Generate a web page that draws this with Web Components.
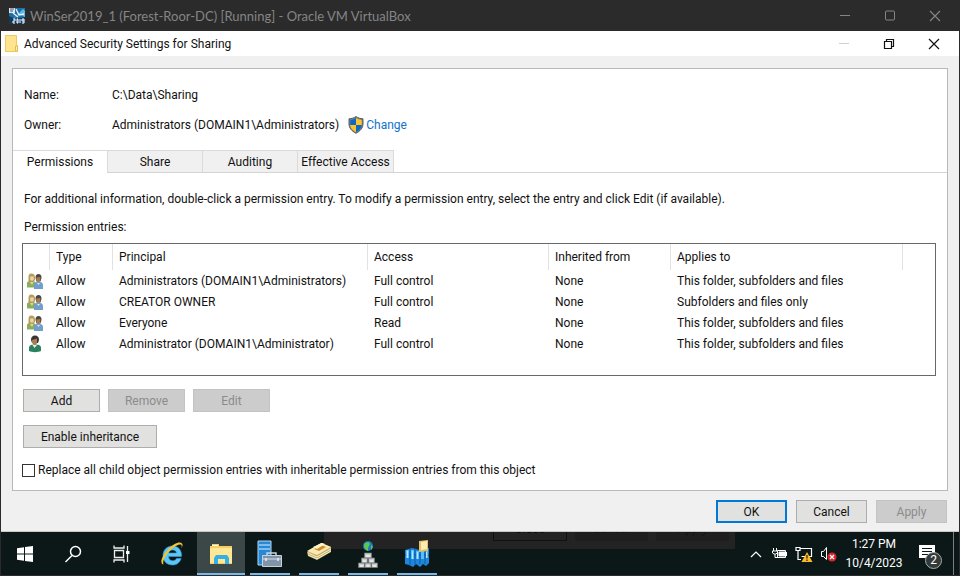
<!DOCTYPE html>
<html lang="en">
<head>
<meta charset="utf-8">
<title>Advanced Security Settings for Sharing</title>
<style>
html, body { margin: 0; height: 100%; }
body { background: #2b2b2b; color: #111; font: 12px/16px Roboto, "Liberation Sans", sans-serif; }
</style>
</head>
<body>
<vm-window></vm-window>
<script>
const define = (name, html, setup) => {
  const template = document.createElement('template');
  template.innerHTML = html;
  customElements.define(name, class extends HTMLElement {
    constructor() {
      super();
      this.attachShadow({ mode: 'open' }).append(template.content.cloneNode(true));
    }
    connectedCallback() { if (setup) setup(this, this.shadowRoot); }
  });
};

const ICONS = {
  vm: `<svg width="16" height="16" viewBox="0 0 16 16"><rect width="16" height="16" fill="#1f6fa8"/><path d="M0 0h6v5H0z" fill="#dce8ee"/><path d="M1 1h4M1 3h3" stroke="#556"/><path d="M3 12 14 1l2 2v6l-6-3z" fill="#5fb8e8"/><path d="M7 1l3 6 5-1M4 5l5 4" stroke="#e8f5fb" stroke-width="1.3" fill="none"/><path d="M0 8l6 3 10-2v7H0z" fill="#123a5c"/><path d="M4 11h2v2H4v2h2M8 11h1v4H8zM11 11v4M13 15h2v-4h-2v2h2" stroke="#fff" fill="none"/></svg>`,
  folder: `<svg width="13" height="18" viewBox="0 0 13 18"><path d="M0 0h12v10h1v7H0z" fill="#ffe48f"/><path d="M0.500 .5h11v10h1v6H.5z" fill="none" stroke="#f0cb5c"/><path d="M10.500 16v-5h2v5z" fill="#fff0b8" stroke="#e6bd4d"/></svg>`,
  shield: `<svg width="16" height="18" viewBox="0 0 16 18"><path d="M8 .5c2 1.500 4.500 2.200 7 2.300v5.200c0 4-3 7.300-7 9.300-4-2-7-5.300-7-9.300V2.800C3.500 2.700 6 2 8 .5z" fill="#7b8187" stroke="#555d63"/><path d="M8 2v7H2.300V4C4.500 3.800 6.500 3.200 8 2z" fill="#0f69c4"/><path d="M8 2v7h5.700V4C11.500 3.800 9.500 3.200 8 2z" fill="#fdc42c"/><path d="M2.300 9H8v7c-3-1.500-5.700-4-5.700-7z" fill="#fdc42c"/><path d="M13.700 9H8v7c3-1.500 5.700-4 5.700-7z" fill="#0f69c4"/></svg>`,
  group: `<svg width="16" height="16" viewBox="0 0 16 16"><path d="M0 14.500V10c0-1.500 2-2 5-2s4 1 4 3v3.500z" fill="#8aad5b"/><path d="M1.500 9V4C1.500 1 3 .5 4.500.5S8 1.500 8 4v3L6 9z" fill="#b29d5c"/><path d="M3.200 3.500h3.500v3c0 1.500-3.500 1.500-3.500 0z" fill="#efd3a6"/><path d="M3 9l2 3 1.500-3z" fill="#e3d5a0"/><path d="M7 16v-4c0-2.500 2-3 4.500-3s4.500.5 4.500 3v4z" fill="#729ecb"/><path d="M8.500 5c0-3 1-4 3-4s3 1 3 4l-1 3.500h-4z" fill="#4c4640"/><path d="M9.300 4.500l4-.5v3c0 2.500-3.500 2.500-4 0z" fill="#a9794f"/><path d="M10 10l1.500 2 1.500-2z" fill="#dbe6ef"/></svg>`,
  user: `<svg width="16" height="18" viewBox="0 0 16 18"><path d="M2 16v-3c0-3 2.500-3.500 6-3.500s6 .5 6 3.500v3c-3 1.500-9 1.500-12 0z" fill="#2c8060"/><path d="M4 5c0-3 1.500-4.500 4-4.500S12 2 12 5l-1 3H5z" fill="#39352f"/><path d="M5 5l5-1.500v4c0 3-4 3.500-5 0z" fill="#a77b56"/><path d="M5.500 10l2 3 2.500-3z" fill="#e9efe9"/></svg>`,
  minimize: `<svg width="10" height="12" viewBox="0 0 10 12"><path d="M0 5.500h10" stroke="currentColor"/></svg>`,
  maximize: `<svg width="10" height="12" viewBox="0 0 10 12"><rect x=".5" y="1" width="9" height="9" rx="1" fill="none" stroke="currentColor"/></svg>`,
  restore: `<svg width="12" height="12" viewBox="0 0 12 12"><path d="M1.500 3.500h7v7h-7zM3.500 3V1.500h7v7H9" fill="none" stroke="currentColor" stroke-width="1.200"/></svg>`,
  close: `<svg width="12" height="12" viewBox="0 0 12 12"><path d="M1 1l10 10M11 1L1 11" stroke="currentColor" stroke-width="1.200"/></svg>`,
  start: `<svg width="16" height="16" viewBox="0 0 16 16" fill="#fff"><path d="M0 2.200 7 1.200v6.300H0zM8 1l8-1v7.500H8zM0 8.500h7v6.300l-7-1zM8 8.500h8V16l-8-1z"/></svg>`,
  search: `<svg width="18" height="18" viewBox="0 0 18 18" fill="none" stroke="#fff" stroke-width="1.500"><circle cx="11.500" cy="6.500" r="5"/><path d="M8 10.500 1.500 17"/></svg>`,
  taskview: `<svg width="18" height="18" viewBox="0 0 18 18" fill="none" stroke="#eee" stroke-width="1.300"><path d="M2 .5V3h10V.5M2 17.500V15h10v2.500M2.500 5.500h9v7h-9zM15.500 1v16"/><path d="M14 6h3.500v3H14z" fill="#fff" stroke="none"/></svg>`,
  ie: `<svg width="24" height="26" viewBox="0 0 24 26"><path d="M21.500 15.500H8.500c.2 5 6.500 5.500 8 2h4.700C19.500 22 16.500 24 12.500 24 6.500 24 3 20 3 14.500S7 5 12.500 5s9.500 4 9 10.500zM8.700 12h7.800c-.3-4-7.300-4.200-7.800 0z" fill="#5cc6f7" stroke="#2f9bd9" stroke-width=".6"/><path d="M3.500 23.500C-1 22 2 15 8 8.500 13.500 2.500 20 0 22 2.500c1 1.200.5 3-.5 5 .5-2.500.5-4-1.500-4C16 3.500 8 10 4.500 17c-1.500 3-1.500 5-1 6.500z" fill="#f5c431"/></svg>`,
  explorer: `<svg width="22" height="20" viewBox="0 0 22 20"><path d="M0 2h2V0h7v2h13v18H0z" fill="#f5cd62"/><path d="M0 4h22v15H0z" fill="#ffe794"/><path d="M2 1h6v1H2z" fill="#fff"/><path d="M4 20v-6l2-3h11l2 3v6h-4v-5H8v5z" fill="#36aee8"/></svg>`,
  server: `<svg width="26" height="28" viewBox="0 0 26 28"><path d="M1 1h13v24H1z" fill="#2589d8" stroke="#b4dcf6"/><path d="M2 5h11M2 9h11" stroke="#d9effb"/><path d="M10 15v-2h9v2" fill="none" stroke="#cbd3db" stroke-width="1.500"/><path d="M5.500 15.500h19v11h-19z" fill="#8095aa" stroke="#c8d2dc"/><path d="M6 19h18" stroke="#d7dee5"/><path d="M9 18v3M21 18v3" stroke="#e9eef2" stroke-width="1.500"/></svg>`,
  notes: `<svg width="26" height="24" viewBox="0 0 26 24"><path d="M1 10 16 1l9 4v5L11 18 2 14z" fill="#c7b06b"/><path d="M1 9 15 1l10 4-14 8z" fill="#f8eab2"/><path d="M8 7l7-4 5 2-7 4z" fill="#d18e28"/><path d="M7 5l9-4 3 1-8 5z" fill="#fff5cc"/><path d="M2 11l9 4 14-8M2 13l9 4 14-8" stroke="#f6edc8" fill="none"/></svg>`,
  network: `<svg width="20" height="28" viewBox="0 0 20 28"><circle cx="10" cy="6" r="5" fill="#1879c9"/><path d="M7 3c4-2 6 0 4 3s0 4-1 5C6 9 5 6 7 3zM13 5l2 2-2 3z" fill="#5fc846"/><g fill="#cbcdcd" stroke="#74797a" stroke-width=".7"><path d="M6.500 13h7v5h-7zM3.500 18h6v5h-6zM10.500 18h6v5h-6zM.5 23h6v4.500h-6zM7 23h6v4.500H7zM13.500 23h6v4.500h-6z"/></g><path d="M8 16h4M5 21h3M12 21h3M2 26h3M8.500 26h3M15 26h3" stroke="#fff"/></svg>`,
  computers: `<svg width="24" height="28" viewBox="0 0 24 28"><path d="M0 10l7-2 8 2 9-2v15l-3 3-3-2-3 3-4-3-3 3-4-2-4-1z" fill="#1e86dc"/><path d="M5 9v16M10 9v16M15 10v14M20 9v15M0 15h24" stroke="#0b5ea8"/><path d="M1 10h3v8H1zM6 10h3v9H6zM11 11h3v8h-3zM16 11h3v8h-3zM21 10h2v8h-2z" fill="#5dbdf7"/><path d="M2 11h1v7H2zM7 11h1v8H7zM12 12h1v7h-1zM21 12h1v6h-1z" fill="#b8e8ff"/><path d="M14 1l9-1v11l-9 1z" fill="#e2c16a"/><path d="M16 2l6-1v8l-6 1z" fill="#fbecb6"/></svg>`,
  chevron: `<svg width="12" height="8" viewBox="0 0 12 8"><path d="M1 7l5-5 5 5" fill="none" stroke="#fff" stroke-width="1.200"/></svg>`,
  battery: `<svg width="16" height="14" viewBox="0 0 16 14" fill="none" stroke="#fff"><path d="M5.500 3.500h8v7h-8z"/><path d="M7 5h6v4H7z" fill="#fff"/><path d="M14.500 5v4M1.500 1v3M4.500 1v3M.5 4h5v2l-2 1H2L.5 6zM3 7v3.500h3"/></svg>`,
  lan: `<svg width="18" height="18" viewBox="0 0 18 18"><path d="M5.500 3.500h11v8h-10M9 14.500h4M1 2.500h4v3H1zM3 5v9.500h3" fill="none" stroke="#fff" stroke-width="1.200"/><path d="M12 7 17.500 17h-11z" fill="#fdb827"/><path d="M12 10v3.500M12 14.500V16" stroke="#222" stroke-width="1.200"/></svg>`,
  sound: `<svg width="17" height="16" viewBox="0 0 17 16"><path d="M1.500 5.500h2l3-4v12l-3-3h-2z" fill="none" stroke="#fff"/><circle cx="12" cy="11" r="4.500" fill="#d8252c"/><path d="M10 9l4 4M14 9l-4 4" stroke="#fff" stroke-width="1.200"/></svg>`,
  notice: `<svg width="16" height="17" viewBox="0 0 16 17"><path d="M0 0h16v13H10L7 17v-4H0z" fill="#fff"/><path d="M3 3.500h10M3 6.500h10M3 9.500h7" stroke="#0b1817"/></svg>`
};

define('ui-icon', `<style>:host{display:inline-flex;flex:none;align-items:center;justify-content:center}svg{display:block}</style>`, (el, root) => {
  root.querySelector('svg')?.remove();
  root.append(document.createRange().createContextualFragment(ICONS[el.getAttribute('name')]));
});

define('caption-controls', `
<style>
:host{display:flex;color:inherit}
button{width:45px;height:24px;padding:0;border:0;background:none;color:inherit;display:grid;place-items:center}
button:disabled{color:#d0d0d0}
</style>
<button aria-label="Minimize"><ui-icon name="minimize"></ui-icon></button>
<button aria-label="Resize"><ui-icon name="maximize"></ui-icon></button>
<button aria-label="Close"><ui-icon name="close"></ui-icon></button>`, (el, root) => {
  if (el.hasAttribute('dialog')) {
    const [min, size] = root.querySelectorAll('button');
    min.disabled = true;
    size.innerHTML = '<ui-icon name="restore"></ui-icon>';
  }
});

define('push-button', `
<style>
:host{display:block}
button{width:100%;height:23px;padding:0;border:1px solid #adadad;background:#e1e1df;color:#111;font:inherit;line-height:20px}
button:disabled{border-color:#c3c3c3;background:#ccc;color:#8b8b8b}
:host([primary]) button{border:2px solid #0078d7;line-height:18px}
</style>
<button type="button"><slot></slot></button>`, (el, root) => {
  root.querySelector('button').disabled = el.hasAttribute('disabled');
});

define('tab-strip', `
<style>
:host{display:flex;border-bottom:1px solid #d4d4d4}
button{width:95px;height:22px;padding:0;font:inherit;color:#111;background:#f0f0f0;border:1px solid #dadada;border-width:1px 1px 0 0;white-space:nowrap}
button:last-child{width:96px}
button[aria-selected=true]{background:#fff;height:23px;margin-bottom:-1px;padding-bottom:1px}
</style>
<button role="tab" aria-selected="true">Permissions</button><button role="tab" aria-selected="false">Share</button><button role="tab" aria-selected="false">Auditing</button><button role="tab" aria-selected="false">Effective Access</button>`, el => el.setAttribute('role', 'tablist'));

define('permission-table', `
<style>
:host{display:block;border:1px solid #686868;background:#fff;height:131px}
table{width:100%;border-spacing:0;table-layout:fixed}
th,td{padding:0 0 0 6px;text-align:left;font-weight:400;white-space:nowrap}
th{height:26px;border-right:1px solid #e2e2e2}
th:last-child{border:0}
td{height:21px;line-height:20px}
td:first-child{padding:0 0 0 4px}
ui-icon{display:flex;width:16px;height:18px}
.i{width:27px}.t{width:63px}.p{width:255px}.a{width:181px}.n{width:122px}.s{width:232px}
</style>
<table><colgroup><col class="i"><col class="t"><col class="p"><col class="a"><col class="n"><col class="s"><col></colgroup>
<thead><tr><th></th><th>Type</th><th>Principal</th><th>Access</th><th>Inherited from</th><th>Applies to</th><th></th></tr></thead><tbody></tbody></table>`, (el, root) => {
  const rows = [
    ['group', 'Administrators (DOMAIN1\\Administrators)', 'Full control', 'This folder, subfolders and files'],
    ['group', 'CREATOR OWNER', 'Full control', 'Subfolders and files only'],
    ['group', 'Everyone', 'Read', 'This folder, subfolders and files'],
    ['user', 'Administrator (DOMAIN1\\Administrator)', 'Full control', 'This folder, subfolders and files']
  ];
  root.querySelector('tbody').innerHTML = rows.map(([icon, who, access, scope]) =>
    `<tr><td><ui-icon name="${icon}"></ui-icon></td><td>Allow</td><td>${who}</td><td>${access}</td><td>None</td><td>${scope}</td><td></td></tr>`).join('');
});

define('security-dialog', `
<style>
:host{display:flex;flex-direction:column;background:#f0f0f0}
header{display:flex;align-items:center;height:25px;background:#fff;padding:0 3px 0 4px;gap:6px}
header caption-controls{margin-left:auto;color:#111}
main{flex:1;margin:12px 11px 0;border:1px solid #b9b9b9;background:#fff}
dl{display:grid;grid-template-columns:88px 1fr;row-gap:10px;margin:0;padding:16px 11px 15px;line-height:20px}
dt,dd{margin:0}
dd{display:flex;align-items:center}
dd ui-icon{margin:0 2px 0 9px}
a{color:#1173cc;text-decoration:none}
p{margin:0;padding-left:11px;line-height:20px}
.intro{padding-top:16px}
.entries{padding-top:8px}
permission-table{margin:6px 11px 0 9px}
.row{display:flex;gap:8px;padding:13px 10px 0}
.row push-button{width:77px}
.row .wide{width:134px}
label{display:flex;align-items:center;gap:3px;padding:12px 9px 0;line-height:20px}
input{appearance:none;width:13px;height:13px;margin:0;border:1px solid #333;background:#fff}
footer{display:flex;justify-content:flex-end;gap:9px;padding:9px 12px 8px;border-bottom:1px solid #c8c8c8}
footer push-button{width:71px}
</style>
<header><ui-icon name="folder"></ui-icon><span>Advanced Security Settings for Sharing</span><caption-controls dialog></caption-controls></header>
<main>
<dl><dt>Name:</dt><dd>C:\\Data\\Sharing</dd><dt>Owner:</dt><dd>Administrators (DOMAIN1\\Administrators)<ui-icon name="shield"></ui-icon><a href="#">Change</a></dd></dl>
<tab-strip></tab-strip>
<p class="intro">For additional information, double-click a permission entry. To modify a permission entry, select the entry and click Edit (if available).</p>
<p class="entries">Permission entries:</p>
<permission-table></permission-table>
<div class="row"><push-button>Add</push-button><push-button disabled>Remove</push-button><push-button disabled>Edit</push-button></div>
<div class="row"><push-button class="wide">Enable inheritance</push-button></div>
<label><input type="checkbox">Replace all child object permission entries with inheritable permission entries from this object</label>
</main>
<footer><push-button primary>OK</push-button><push-button>Cancel</push-button><push-button disabled>Apply</push-button></footer>`);

define('task-bar', `
<style>
:host{display:flex;position:relative;background:#0b1817;color:#fff;height:43px}
button{border:0;padding:0;background:none;color:inherit;font:inherit;display:grid;place-items:center}
nav{display:flex;position:relative}
.system{padding-right:3px}
.system button{width:48px}
.apps{gap:1px}
.apps button{width:48px;position:relative}
.apps .open::after{content:"";position:absolute;bottom:0;left:4px;right:4px;height:2px;background:#76b9ed}
.apps .active{background:#3b4847}
.apps .active::after{left:0;right:0}
.ghost{position:absolute;left:323px;bottom:26px;width:405px;height:32px;padding-right:6px;background:#232323;display:flex;justify-content:flex-end;gap:8px;color:#0c0c0c;line-height:24px;text-align:center}
.ghost span{width:73px;height:24px;background:#1e1e1e}
.ghost span:first-child{border:1px solid #111;width:72px;height:22px;line-height:22px;background:#232323}
.ghost span + span{color:#151515}
.tray{display:flex;align-items:center;margin-left:auto;position:relative}
.tray>button{width:24px;height:43px}
time{display:block;width:70px;text-align:center;line-height:19px;margin-left:-1px}
.tray .centre{width:36px;position:relative;margin-right:2px}
.badge{position:absolute;left:16px;top:20px;width:15px;height:15px;border:1px solid #aaa;border-radius:50%;background:#333b3a;line-height:15px;text-align:center}
.tray .desk{width:6px;border-left:1px solid #77807f;margin-left:6px}
</style>
<div class="ghost" aria-hidden="true"><span>Close</span><span>Cancel</span><span>Apply</span></div>
<nav class="system"><button aria-label="Start"><ui-icon name="start"></ui-icon></button><button aria-label="Search"><ui-icon name="search"></ui-icon></button><button aria-label="Task View"><ui-icon name="taskview"></ui-icon></button></nav>
<nav class="apps"><button aria-label="Internet Explorer"><ui-icon name="ie"></ui-icon></button><button class="open active" aria-label="File Explorer"><ui-icon name="explorer"></ui-icon></button><button class="open" aria-label="Server Manager"><ui-icon name="server"></ui-icon></button><button class="open" aria-label="Directory Book"><ui-icon name="notes"></ui-icon></button><button class="open" aria-label="DNS"><ui-icon name="network"></ui-icon></button><button class="open" aria-label="Computers"><ui-icon name="computers"></ui-icon></button></nav>
<div class="tray"><button aria-label="Show hidden icons"><ui-icon name="chevron"></ui-icon></button><button aria-label="Power"><ui-icon name="battery"></ui-icon></button><button aria-label="Network"><ui-icon name="lan"></ui-icon></button><button aria-label="Volume"><ui-icon name="sound"></ui-icon></button><time>1:27 PM<br>10/4/2023</time><button class="centre" aria-label="Notifications"><ui-icon name="notice"></ui-icon><span class="badge">2</span></button><button class="desk" aria-label="Show desktop"></button></div>`);

define('vm-window', `
<style>
:host{display:flex;flex-direction:column;min-height:100vh}
header{display:flex;align-items:center;height:31px;padding:0 3px 0 9px;gap:5px;color:#858585;font-family:Lato,sans-serif;font-size:13px}
caption-controls{margin-left:auto}
.screen{flex:1;display:flex;flex-direction:column;margin:0 1px 1px}
security-dialog{flex:1;position:relative;z-index:1}
</style>
<header><ui-icon name="vm"></ui-icon><span>WinSer2019_1 (Forest-Roor-DC) [Running] - Oracle VM VirtualBox</span><caption-controls></caption-controls></header>
<div class="screen"><security-dialog></security-dialog><task-bar></task-bar></div>`);
</script>
</body>
</html>
